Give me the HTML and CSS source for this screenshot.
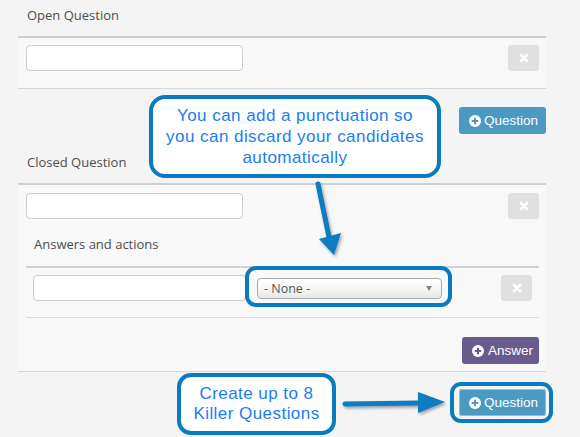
FILE: index.html
```html
<!DOCTYPE html>
<html>
<head>
<meta charset="utf-8">
<link rel="stylesheet" href="styles.css">
</head>
<body>
<div class="page">
  <div class="label label-top">Open Question</div>
  <div class="panel panel-open">
    <div class="row">
      <div class="input q-input"></div>
      <div class="del"><svg width="10" height="10" viewBox="0 0 10 10"><path d="M2 2L8 8M8 2L2 8" stroke="#fff" stroke-width="2.6" stroke-linecap="round"/></svg></div>
    </div>
  </div>
  <div class="actions actions-mid">
    <div class="btn btn-q"><svg class="plus" width="12" height="12" viewBox="0 0 12 12"><circle cx="6" cy="6" r="6" fill="#fff"/><path d="M6 2.8V9.2M2.8 6H9.2" stroke="#4a9ac2" stroke-width="2"/></svg><span>Question</span></div>
  </div>
  <div class="label label-closed">Closed Question</div>
  <div class="panel panel-closed">
    <div class="row">
      <div class="input q-input"></div>
      <div class="del"><svg width="10" height="10" viewBox="0 0 10 10"><path d="M2 2L8 8M8 2L2 8" stroke="#fff" stroke-width="2.6" stroke-linecap="round"/></svg></div>
    </div>
    <div class="sublabel">Answers and actions</div>
    <div class="answers">
      <div class="answer-row">
        <div class="input a-input"></div>
        <div class="select"><span>- None -</span><span class="caret"></span></div>
        <div class="del"><svg width="10" height="10" viewBox="0 0 10 10"><path d="M2 2L8 8M8 2L2 8" stroke="#fff" stroke-width="2.6" stroke-linecap="round"/></svg></div>
      </div>
    </div>
    <div class="actions actions-answer">
      <div class="btn btn-a"><svg class="plus" width="12" height="12" viewBox="0 0 12 12"><circle cx="6" cy="6" r="6" fill="#fff"/><path d="M6 2.8V9.2M2.8 6H9.2" stroke="#6a5b8e" stroke-width="2"/></svg><span>Answer</span></div>
    </div>
  </div>
  <div class="actions actions-bottom">
    <div class="btn btn-q btn-q-ring"><svg class="plus" width="12" height="12" viewBox="0 0 12 12"><circle cx="6" cy="6" r="6" fill="#fff"/><path d="M6 2.8V9.2M2.8 6H9.2" stroke="#4a9ac2" stroke-width="2"/></svg><span>Question</span></div>
  </div>

  <div class="callout callout-1">You can add a punctuation so<br>you can discard your candidates<br>automatically</div>
  <div class="highlight hl-select"></div>
  <div class="callout callout-2">Create up to 8<br>Killer Questions</div>
  <div class="highlight hl-button"></div>
  <svg class="arrows" width="580" height="437" viewBox="0 0 580 437">
    <defs>
      <filter id="sh" x="-20%" y="-20%" width="140%" height="140%">
        <feDropShadow dx="1.5" dy="2" stdDeviation="1.5" flood-color="#000" flood-opacity="0.35"/>
      </filter>
    </defs>
    <g filter="url(#sh)" fill="#0a7bc0" stroke="#0a7bc0">
      <line x1="318" y1="184" x2="329" y2="237" stroke-width="5" stroke-linecap="round"/>
      <polygon points="319,239 341,233 334,255" stroke="none"/>
      <line x1="345" y1="404" x2="420" y2="403" stroke-width="5" stroke-linecap="round"/>
      <polygon points="418,392 445,402 418,413" stroke="none"/>
    </g>
  </svg>
</div>
</body>
</html>
```

FILE: styles.css
```css
* { box-sizing: border-box; }
html, body { margin: 0; padding: 0; }
body {
  background: #f4f4f4;
  font-family: "Open Sans", "Liberation Sans", sans-serif;
  color: #4d4d4d;
  width: 580px;
  height: 437px;
  overflow: hidden;
}
.page {
  position: relative;
  width: 580px;
  height: 437px;
  padding-left: 18px;
}
.label,
.panel,
.actions-mid,
.actions-bottom { width: 528px; }

.label {
  font-size: 13px;
  line-height: 18px;
  padding-left: 9px;
}
.label-top { padding-top: 6px; margin-bottom: 12px; }
.label-closed { margin-top: 19px; margin-bottom: 12px; }

.panel {
  background: #f8f8f8;
  border-top: 2px solid #cfcfcf;
  border-bottom: 1px solid #d6d6d6;
  padding: 0 7px 0 8px;
}
.panel-open { padding-top: 7px; padding-bottom: 17px; }
.panel-closed { padding-top: 8px; padding-bottom: 7px; }

.row {
  display: flex;
  justify-content: space-between;
  align-items: center;
}
.input {
  height: 26px;
  background: #fff;
  border: 1px solid #cccccc;
  border-radius: 4px;
}
.q-input { width: 217px; }
.a-input { width: 213px; }

.del {
  width: 31px;
  height: 26px;
  background: #e0e0e0;
  border-radius: 3px;
  display: flex;
  align-items: center;
  justify-content: center;
}
.del svg { display: block; }

.sublabel {
  font-size: 13px;
  line-height: 18px;
  padding-left: 8px;
  margin-top: 16px;
  margin-bottom: 13px;
}
.answers {
  border-top: 2px solid #d2d2d2;
  border-bottom: 1px solid #dcdcdc;
  padding: 7px 7px 16px 7px;
}
.answer-row {
  display: flex;
  align-items: center;
}
.select {
  width: 185px;
  height: 21px;
  margin-left: 11px;
  border: 1px solid #aaaaaa;
  border-radius: 4px;
  background: linear-gradient(#ffffff 0%, #f6f6f6 50%, #e8e8e8 100%);
  display: flex;
  align-items: center;
  justify-content: space-between;
  padding: 0 9px 0 6px;
  font-size: 12.5px;
  color: #555;
}
.caret {
  width: 0; height: 0;
  border-left: 3.5px solid transparent;
  border-right: 3.5px solid transparent;
  border-top: 5px solid #888;
}
.answer-row .del { margin-left: auto; }

.actions {
  display: flex;
  justify-content: flex-end;
}
.actions-mid { margin-top: 18px; }
.actions-answer { margin-top: 19px; }
.actions-bottom { margin-top: 17px; }

.btn {
  height: 27px;
  border-radius: 3px;
  display: flex;
  align-items: center;
  gap: 3px;
  color: #fff;
  font-family: "Liberation Sans", Arial, sans-serif;
  font-size: 13.5px;
}
.plus { display: block; }
.btn-q {
  width: 87px;
  background: #4a9ac2;
  padding-left: 10px;
}
.btn-q-ring { box-shadow: inset 0 0 0 1px #8cc0da; }
.btn-a {
  width: 77px;
  background: #6a5b8e;
  padding-left: 10px;
  gap: 4px;
}

/* annotation overlays */
.callout {
  position: absolute;
  background: #fff;
  border: 4px solid #0a7bc0;
  color: #1a7df2;
  font-family: "Liberation Sans", Arial, sans-serif;
  text-align: center;
  display: flex;
  align-items: center;
  justify-content: center;
  font-size: 17px;
  letter-spacing: 0.45px;
}
.callout-1 {
  left: 149px; top: 95px;
  width: 292px; height: 83px;
  border-radius: 16px;
  line-height: 21px;
}
.callout-2 {
  left: 177px; top: 373px;
  width: 159px; height: 62px;
  border-radius: 14px;
  line-height: 20px;
}
.highlight {
  position: absolute;
  border: 4px solid #0a7bc0;
  border-radius: 11px;
}
.hl-select { left: 245px; top: 266px; width: 207px; height: 41px; }
.hl-button { left: 450px; top: 382px; width: 103px; height: 41px; }
.arrows {
  position: absolute;
  left: 0; top: 0;
  width: 580px;
  height: 437px;
  pointer-events: none;
}
```
